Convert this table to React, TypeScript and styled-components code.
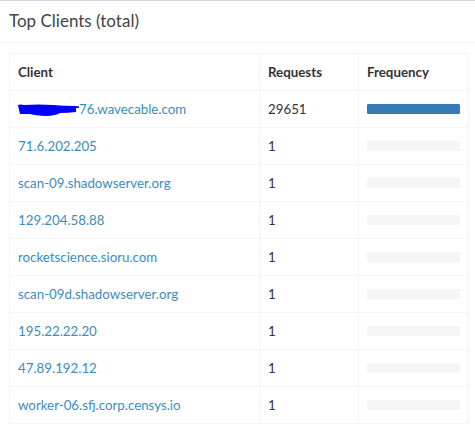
import React from "react";
import styled, { createGlobalStyle } from "styled-components";

const Global = createGlobalStyle`
  html, body { margin: 0; padding: 0; background: #fff; overflow: hidden; }
  body { font-family: "Lato", "Liberation Sans", sans-serif; font-size: 14px; color: #333; }
`;

const Box = styled.div`
  width: 476px;
  margin-left: -1px;
  border-top: 1px solid #d2d6de;
  background: #fff;
`;

const BoxHeader = styled.div`
  padding: 9px 10px 10px 10px;
  border-bottom: 1px solid #f4f4f4;
  height: 22px;
  display: flex;
  align-items: center;
`;

const BoxTitle = styled.h3`
  margin: 0;
  font-size: 17px;
  font-weight: 400;
  color: #444;
  line-height: 22px;
`;

const BoxBody = styled.div`
  padding: 10px 7px 10px 10px;
`;

const Table = styled.table`
  width: 460px;
  border-collapse: collapse;
  border: 1px solid #f4f4f4;
  table-layout: fixed;
`;

const Col = styled.col<{ $w?: number }>`
  width: ${(p) => (p.$w ? `${p.$w}px` : "auto")};
`;

const Th = styled.th`
  text-align: left;
  font-weight: 700;
  padding: 8px;
  height: 20px;
  line-height: 20px;
  border: 1px solid #f4f4f4;
  color: #333;
  font-size: 13.3px;
`;

const Td = styled.td`
  padding: 8px;
  height: 20px;
  line-height: 20px;
  border: 1px solid #f4f4f4;
  font-size: 13.3px;
  white-space: nowrap;
  vertical-align: middle;
`;

const Link = styled.a`
  color: #3c8dbc;
  text-decoration: none;
  display: inline-flex;
  align-items: center;
  height: 20px;
  vertical-align: top;
`;

const Progress = styled.div`
  height: 10px;
  background: #f5f5f5;
  border-radius: 1px;
  overflow: hidden;
`;

const Bar = styled.div`
  height: 100%;
  background: #337ab7;
  border-radius: 1px;
`;

const Redact = styled.svg`
  display: block;
  margin-right: 0;
  margin-top: 2px;
`;

const rows: { client: string; count: number; redacted?: boolean }[] = [
  { client: "76.wavecable.com", count: 29651, redacted: true },
  { client: "71.6.202.205", count: 1 },
  { client: "scan-09.shadowserver.org", count: 1 },
  { client: "129.204.58.88", count: 1 },
  { client: "rocketscience.sioru.com", count: 1 },
  { client: "scan-09d.shadowserver.org", count: 1 },
  { client: "195.22.22.20", count: 1 },
  { client: "47.89.192.12", count: 1 },
  { client: "worker-06.sfj.corp.censys.io", count: 1 },
];

const total = 29651;

export default function App() {
  return (
    <>
      <Global />
      <Box>
        <BoxHeader>
          <BoxTitle>Top Clients (total)</BoxTitle>
        </BoxHeader>
        <BoxBody>
          <Table>
            <colgroup>
              <Col $w={250} />
              <Col $w={99} />
              <Col />
            </colgroup>
            <thead>
              <tr>
                <Th>Client</Th>
                <Th>Requests</Th>
                <Th>Frequency</Th>
              </tr>
            </thead>
            <tbody>
              {rows.map((r, i) => {
                const pct = (r.count / total) * 100;
                return (
                  <tr key={i}>
                    <Td>
                      <Link href="#">
                        {r.redacted && (
                          <Redact width="61" height="14" viewBox="0 0 61 14">
                            <path
                              d="M0 2 Q2 1 6 2 Q20 1 35 2 Q45 3 58 3 L61 3.6 L61 5 L58 5 L58 9 Q50 10 42 10 Q38 12.5 28 13 Q18 12.5 12 11 Q6 11 2 11 L1 7 Z"
                              fill="#0000ff"
                            />
                          </Redact>
                        )}
                        {r.client}
                      </Link>
                    </Td>
                    <Td>{r.count}</Td>
                    <Td>
                      <Progress>
                        <Bar style={{ width: `${pct < 1 ? 0 : pct}%` }} />
                      </Progress>
                    </Td>
                  </tr>
                );
              })}
            </tbody>
          </Table>
        </BoxBody>
      </Box>
    </>
  );
}
